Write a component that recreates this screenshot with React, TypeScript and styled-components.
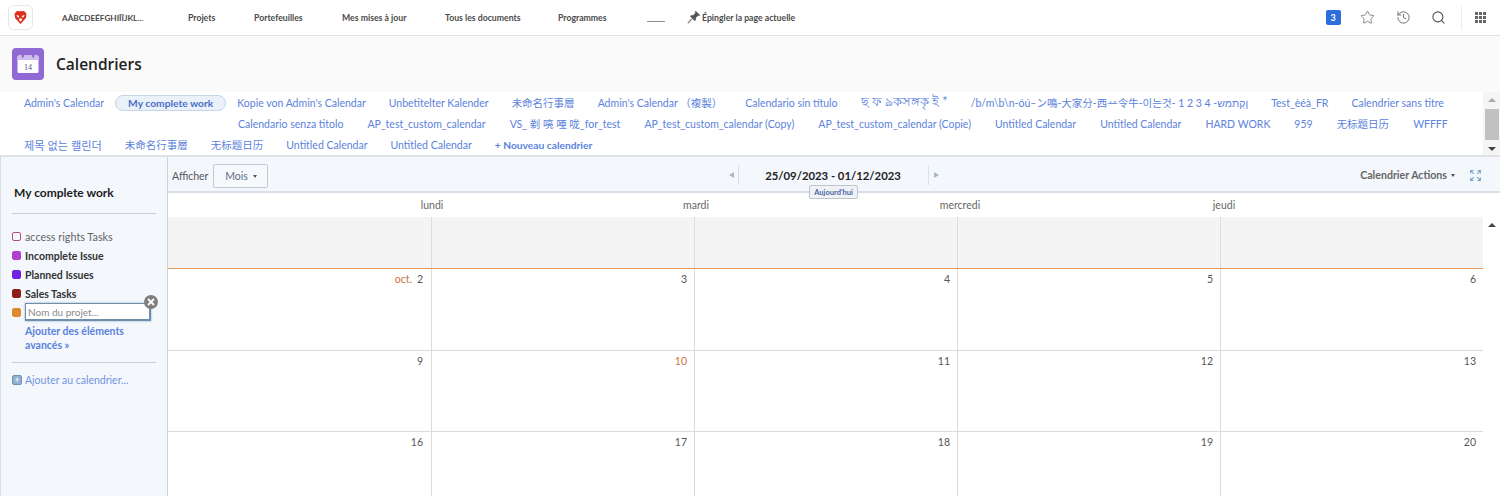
import React from 'react';
import styled, { createGlobalStyle } from 'styled-components';
import { History, Search, Star } from 'lucide-react';

const GlobalStyle = createGlobalStyle`
  html, body {
    margin: 0;
    height: 100%;
    overflow: hidden;
    background: #fff;
    font-family: Lato, "Noto Sans CJK SC", "Noto Sans CJK KR", sans-serif;
  }
`;

const Page = styled.div`
  width: 1500px;
  height: 496px;
  display: flex;
  flex-direction: column;
  overflow: hidden;
`;

/* top navigation */
const TopBar = styled.header`
  height: 35px;
  flex: none;
  display: flex;
  align-items: center;
  padding-left: 8px;
  background: #fff;
  border-bottom: 1px solid #e3e3e3;
`;

const LogoBox = styled.div`
  width: 25px;
  height: 25px;
  box-sizing: border-box;
  border: 1px solid #e8e8e8;
  border-radius: 5px;
  display: flex;
  align-items: center;
  justify-content: center;
  margin-right: 29px;
`;

const NavItem = styled.a<{ $width: number; $size?: number }>`
  width: ${(p) => p.$width}px;
  flex: none;
  font-size: ${(p) => p.$size ?? 8.7}px;
  font-weight: 700;
  color: #4b4b4b;
  white-space: nowrap;
`;

const NavDash = styled.span`
  width: 18px;
  height: 1px;
  margin: 8px 22px 0 0;
  background: #8e8e8e;
  flex: none;
`;

const PinLabel = styled.span`
  display: flex;
  align-items: center;
  gap: 1px;
  font-size: 8.7px;
  font-weight: 700;
  color: #4b4b4b;
  margin-top: -1px;
`;

const TopRight = styled.div`
  margin-left: auto;
  display: flex;
  align-items: center;
`;

const CountBadge = styled.span`
  width: 15px;
  height: 15px;
  background: #2c6fdc;
  border-radius: 2px;
  color: #fff;
  font-size: 9px;
  font-weight: 700;
  display: flex;
  align-items: center;
  justify-content: center;
  margin-right: 19px;
`;

const IconSlot = styled.span<{ $color?: string }>`
  width: 16px;
  height: 16px;
  display: flex;
  align-items: center;
  justify-content: center;
  margin-right: 19.5px;
  color: ${(p) => p.$color ?? '#666'};
`;

const AppsSlot = styled.div`
  height: 24px;
  width: 24px;
  border-left: 1px solid #ececec;
  margin-left: -5px;
  margin-right: 14px;
  display: flex;
  align-items: center;
  justify-content: flex-end;
`;

const AppsGrid = styled.div`
  display: grid;
  grid-template-columns: repeat(3, 2.6px);
  gap: 1.6px;
`;

const AppsDot = styled.i`
  width: 2.6px;
  height: 2.6px;
  background: #666;
`;

/* page title */
const TitleBar = styled.div`
  height: 56px;
  flex: none;
  display: flex;
  align-items: center;
  gap: 12px;
  padding-left: 12px;
  background: #fafafa;
`;

const Title = styled.h1`
  margin: 0;
  font-family: "Open Sans", sans-serif;
  font-size: 15.5px;
  font-weight: 600;
  color: #222;
`;

/* calendar tabs */
const TabsWrap = styled.div`
  height: 63px;
  flex: none;
  display: flex;
  background: #fff;
  border-bottom: 2px solid #dfe1e3;
`;

const TabRows = styled.div`
  flex: 1;
  min-width: 0;
`;

const TabRow = styled.div<{ $indent: number; $gap: number }>`
  height: 21px;
  display: flex;
  align-items: center;
  gap: ${(p) => p.$gap}px;
  padding-left: ${(p) => p.$indent}px;
  white-space: nowrap;
`;

const Tab = styled.a<{ $active?: boolean; $bold?: boolean; $size?: number }>`
  font-size: ${(p) => p.$size ?? (p.$bold || p.$active ? 10.25 : 10.5)}px;
  color: #5b82dc;
  font-weight: ${(p) => (p.$active || p.$bold ? 700 : 400)};
  ${(p) =>
    p.$active &&
    `
    background: #eaf1f9;
    border: 1px solid #c4d5e8;
    border-radius: 9px;
    padding: 1px 12px;
    margin: 0 -12px 0 -12px;
    color: #4a6fc8;
  `}
`;

const ScrollBar = styled.div`
  width: 17px;
  flex: none;
  display: flex;
  flex-direction: column;
  align-items: center;
  background: #f5f5f5;
  justify-content: space-between;
  padding: 6px 0 4px;
  box-sizing: border-box;
`;

const ScrollThumb = styled.div`
  width: 14px;
  height: 31px;
  background: #c1c1c1;
`;

const ArrowUp = styled.i<{ $color?: string }>`
  width: 0;
  height: 0;
  border-left: 4px solid transparent;
  border-right: 4px solid transparent;
  border-bottom: 4px solid ${(p) => p.$color ?? '#444'};
`;

const ArrowDown = styled.i`
  width: 0;
  height: 0;
  border-left: 4px solid transparent;
  border-right: 4px solid transparent;
  border-top: 4px solid #444;
`;

/* body */
const Body = styled.div`
  flex: 1;
  min-height: 0;
  display: flex;
`;

const Sidebar = styled.aside`
  width: 168px;
  flex: none;
  box-sizing: border-box;
  background: #f4f8fd;
  border-left: 1px solid #d5dde6;
  border-right: 1px solid #c9d3de;
  padding: 0 11px;
`;

const SideTitle = styled.h2`
  margin: 0;
  height: 57px;
  display: flex;
  align-items: center;
  box-sizing: border-box;
  padding: 15px 0 0 2px;
  font-size: 12px;
  font-weight: 700;
  color: #1c1c1c;
  border-bottom: 1px solid #c5cfda;
`;

const SideList = styled.div`
  padding-top: 13px;
  padding-bottom: 10px;
  border-bottom: 1px solid #c5cfda;
`;

const SideRow = styled.div`
  height: 19px;
  display: flex;
  align-items: center;
  gap: 4px;
`;

const Swatch = styled.span<{ $color: string; $hollow?: boolean }>`
  width: 9px;
  height: 9px;
  box-sizing: border-box;
  flex: none;
  border-radius: 2px;
  border: 1px solid ${(p) => p.$color};
  background: ${(p) => (p.$hollow ? 'transparent' : p.$color)};
`;

const SideLabel = styled.span<{ $bold?: boolean }>`
  font-size: ${(p) => (p.$bold ? '10.5px' : '10.8px')};
  color: ${(p) => (p.$bold ? '#333' : '#666')};
  font-weight: ${(p) => (p.$bold ? 700 : 400)};
`;

const InputRow = styled.div`
  position: relative;
  display: flex;
  align-items: center;
  gap: 4px;
`;

const NameInput = styled.div`
  width: 126px;
  height: 18px;
  box-sizing: border-box;
  background: #fff;
  border: 1px solid #6f8eac;
  border-right-width: 2px;
  border-bottom-width: 2px;
  box-shadow: 0 0 2px #88a4c0;
  font-size: 10px;
  color: #8a8a8a;
  padding: 2px 2px;
  line-height: 12px;
`;

const ClearBadge = styled.span`
  position: absolute;
  left: 132px;
  top: -8px;
  width: 14px;
  height: 14px;
  border-radius: 50%;
  background: #7f7f7f;
  display: flex;
  align-items: center;
  justify-content: center;
`;

const AdvancedLink = styled.a`
  display: block;
  margin: 4px 0 0 13px;
  font-size: 10.5px;
  line-height: 13.5px;
  font-weight: 700;
  color: #5b82dc;
`;

const AddRow = styled.div`
  display: flex;
  align-items: center;
  gap: 3px;
  margin-top: 11px;
  font-size: 10.5px;
  color: #6f93e0;
`;

const AddIcon = styled.span`
  width: 8px;
  height: 8px;
  background: #8fb0cf;
  border: 1px solid #6f93b5;
  border-radius: 2px;
  color: #fff;
  font-size: 9px;
  line-height: 8px;
  text-align: center;
`;

/* calendar */
const Main = styled.main`
  flex: 1;
  min-width: 0;
  display: flex;
  flex-direction: column;
`;

const Toolbar = styled.div`
  height: 36px;
  flex: none;
  box-sizing: border-box;
  position: relative;
  display: grid;
  grid-template-columns: 1fr auto 1fr;
  align-items: center;
  background: #f4f8fd;
  border-bottom: 2px solid #d7dfe8;
  padding: 3px 19px 0 4px;
`;

const ToolLeft = styled.div`
  display: flex;
  align-items: center;
  gap: 5px;
  font-size: 10.5px;
  color: #555;
`;

const ViewButton = styled.button`
  width: 55px;
  height: 24px;
  padding: 0;
  background: #f6f9fc;
  border: 1px solid #c3c9d0;
  border-radius: 2px;
  font: inherit;
  color: #5d6c88;
  display: flex;
  align-items: center;
  justify-content: center;
  gap: 5px;
`;

const Caret = styled.i`
  width: 0;
  height: 0;
  border-left: 2.5px solid transparent;
  border-right: 2.5px solid transparent;
  border-top: 3px solid #555;
  margin-top: 1px;
`;

const DateNav = styled.div`
  display: flex;
  align-items: center;
  margin: -1px 0 0 14px;
`;

const ArrowLeft = styled.i`
  width: 0;
  height: 0;
  border-top: 3.5px solid transparent;
  border-bottom: 3.5px solid transparent;
  border-right: 5px solid #a9b6c4;
`;

const ArrowRight = styled.i`
  width: 0;
  height: 0;
  border-top: 3.5px solid transparent;
  border-bottom: 3.5px solid transparent;
  border-left: 5px solid #a9b6c4;
`;

const DateRange = styled.div`
  width: 189px;
  height: 20px;
  margin: 0 5px 0 4px;
  border-left: 1px solid #d9e0e8;
  border-right: 1px solid #d9e0e8;
  display: flex;
  align-items: center;
  justify-content: center;
  font-size: 11.3px;
  font-weight: 700;
  color: #222;
`;

const TodayButton = styled.button`
  position: absolute;
  left: 641px;
  top: 28px;
  width: 49px;
  height: 14px;
  padding: 0;
  background: #f0f2f5;
  border: 1px solid #bfc4ca;
  border-radius: 2px;
  font-family: inherit;
  font-size: 7.5px;
  font-weight: 700;
  color: #4a65a6;
  z-index: 1;
`;

const ToolRight = styled.div`
  display: flex;
  align-items: center;
  justify-content: flex-end;
  gap: 15px;
  margin-top: -1px;
`;

const ActionsLabel = styled.span`
  display: flex;
  align-items: center;
  gap: 4px;
  font-size: 10.6px;
  font-weight: 700;
  color: #666;
`;

const GridArea = styled.div`
  flex: 1;
  min-height: 0;
  display: flex;
  overflow: hidden;
`;

const GridColumn = styled.div`
  width: 1315px;
  flex: none;
`;

const DayHeads = styled.div`
  height: 24px;
  display: grid;
  grid-template-columns: repeat(4, 264px);
  padding-left: 132px;
  align-items: center;
  font-size: 10.5px;
  color: #666;
`;

const DayHead = styled.span`
  text-align: center;
`;

const Week = styled.div<{ $height: number; $top?: boolean }>`
  height: ${(p) => p.$height}px;
  box-sizing: border-box;
  display: grid;
  grid-template-columns: repeat(5, 263px);
  ${(p) =>
    p.$top
      ? 'background: #f4f4f4; border-bottom: 1px solid #e59a5c;'
      : 'border-bottom: 1px solid #dcdcdc;'}
`;

const DayCell = styled.div`
  box-sizing: border-box;
  border-left: 1px solid #dcdcdc;
  padding: 4px 7px 0 0;
  display: flex;
  justify-content: flex-end;
  gap: 5px;
  font-size: 10.5px;
  color: #555;
  &:first-child {
    border-left: none;
    padding-right: 8px;
  }
`;

const DayMark = styled.span`
  color: #c8743a;
`;

const GridScroll = styled.div`
  flex: 1;
  display: flex;
  justify-content: center;
  padding-top: 30px;
`;

const row1: { label: string; size?: number }[] = [
  { label: "Kopie von Admin's Calendar" },
  { label: 'Unbetitelter Kalender' },
  { label: '未命名行事層' },
  { label: "Admin's Calendar （複製）" },
  { label: 'Calendario sin título' },
  { label: 'ছ ফ ঌকসঙ্গকৃ ই *', size: 12.5 },
  { label: '/b/m\\b\\n-óú–ン鳴-大家分-西䒑令牛-이는것- 1 2 3 4 -ןקְתמש' },
  { label: 'Test_èéà_FR' },
  { label: 'Calendrier sans titre' },
];

const row2 = [
  'Calendario senza titolo',
  'AP_test_custom_calendar',
  'VS_ 剃 喨 唖 咙_for_test',
  'AP_test_custom_calendar (Copy)',
  'AP_test_custom_calendar (Copie)',
  'Untitled Calendar',
  'Untitled Calendar',
  'HARD WORK',
  '959',
  '无标题日历',
  'WFFFF',
];

const row3 = ['未命名行事層', '无标题日历', 'Untitled Calendar', 'Untitled Calendar'];

const sideItems = [
  { label: 'Incomplete Issue', color: '#b23fd0' },
  { label: 'Planned Issues', color: '#6f23e0' },
  { label: 'Sales Tasks', color: '#8f1a1a' },
];

const weeks = [
  { height: 82, days: ['2', '3', '4', '5', '6'], mark: 'oct.' },
  { height: 81, days: ['9', '10', '11', '12', '13'] },
  { height: 81, days: ['16', '17', '18', '19', '20'] },
];

const BrandLogo = () => (
  <svg width="15" height="15" viewBox="0 0 16 16">
    <path d="M4.2 1 L8 1.4 L11.8 1 L14.4 4 L13.8 8.4 L8 15 L2.2 8.4 L1.6 4 Z" fill="#de2f1c" />
    <path d="M3.6 5 L6.6 6.4 L6.2 8 L4.8 7.6 Z M12.4 5 L9.4 6.4 L9.8 8 L11.2 7.6 Z" fill="#fff" />
    <path d="M6.4 9.4 L8 8.8 L9.6 9.4 L9.2 11.2 L8 12.2 L6.8 11.2 Z" fill="#fff" />
  </svg>
);

const CalendarIcon = () => (
  <svg width="32" height="32" viewBox="0 0 32 32">
    <rect width="32" height="32" rx="4" fill="#9069d4" />
    <rect x="5.5" y="7.5" width="21" height="17.5" rx="1.5" fill="#fff" />
    <path d="M5.5 12 V9 A1.5 1.5 0 0 1 7 7.5 H25 A1.5 1.5 0 0 1 26.5 9 V12 Z" fill="#cdbdea" />
    <rect x="10" y="6.5" width="1.5" height="3" fill="#7a56bf" />
    <rect x="20.5" y="6.5" width="1.5" height="3" fill="#7a56bf" />
    <text x="16" y="21.5" textAnchor="middle" fontSize="8" fontFamily="Liberation Serif, serif" fill="#5b4a86">14</text>
  </svg>
);

const PinIcon = () => (
  <svg width="14" height="14" viewBox="0 0 14 14">
    <path d="M8.6 0.8 L13.2 5.2 L12.2 6 L11.2 5.6 L8.8 8 L8.8 10.2 L7.8 11 L3 6.2 L3.9 5.2 L6.1 5.2 L8.5 2.8 L8 1.7 Z" fill="#555" />
    <path d="M5 8.8 L0.8 13.2" stroke="#777" strokeWidth="1.2" />
  </svg>
);

const ExpandIcon = () => (
  <svg width="11" height="11" viewBox="0 0 11 11" fill="none" stroke="#7fa6c9" strokeWidth="1.1">
    <path d="M0.6 3.4 V0.6 H3.4 M0.8 0.8 L3.8 3.8" />
    <path d="M7.6 0.6 H10.4 V3.4 M10.2 0.8 L7.2 3.8" />
    <path d="M0.6 7.6 V10.4 H3.4 M0.8 10.2 L3.8 7.2" />
    <path d="M7.6 10.4 H10.4 V7.6 M10.2 10.2 L7.2 7.2" />
  </svg>
);

const App: React.FC = () => (
  <Page>
    <GlobalStyle />
    <TopBar>
      <LogoBox>
        <BrandLogo />
      </LogoBox>
      <NavItem $width={126} $size={8.2}>AÀBCDEÉFGHIÎÏJKL...</NavItem>
      <NavItem $width={66}>Projets</NavItem>
      <NavItem $width={88}>Portefeuilles</NavItem>
      <NavItem $width={103}>Mes mises à jour</NavItem>
      <NavItem $width={113}>Tous les documents</NavItem>
      <NavItem $width={89}>Programmes</NavItem>
      <NavDash />
      <PinLabel>
        <PinIcon />
        Épingler la page actuelle
      </PinLabel>
      <TopRight>
        <CountBadge>3</CountBadge>
        <IconSlot $color="#777">
          <Star size={15} strokeWidth={1.4} />
        </IconSlot>
        <IconSlot>
          <History size={15} strokeWidth={1.5} />
        </IconSlot>
        <IconSlot $color="#555">
          <Search size={15} strokeWidth={1.8} />
        </IconSlot>
        <AppsSlot>
          <AppsGrid>
            {Array.from({ length: 9 }).map((_, i) => (
              <AppsDot key={i} />
            ))}
          </AppsGrid>
        </AppsSlot>
      </TopRight>
    </TopBar>

    <TitleBar>
      <CalendarIcon />
      <Title>Calendriers</Title>
    </TitleBar>

    <TabsWrap>
      <TabRows>
        <TabRow $indent={24} $gap={23}>
          <Tab>Admin's Calendar</Tab>
          <Tab $active>My complete work</Tab>
          {row1.map((t) => (
            <Tab key={t.label} $size={t.size}>
              {t.label}
            </Tab>
          ))}
        </TabRow>
        <TabRow $indent={238} $gap={24}>
          {row2.map((t, i) => (
            <Tab key={i}>{t}</Tab>
          ))}
        </TabRow>
        <TabRow $indent={24} $gap={23}>
          <Tab $size={11.2}>제목 없는 캘린더</Tab>
          {row3.map((t, i) => (
            <Tab key={i}>{t}</Tab>
          ))}
          <Tab $bold>+ Nouveau calendrier</Tab>
        </TabRow>
      </TabRows>
      <ScrollBar>
        <ArrowUp $color="#aaa" />
        <ScrollThumb />
        <ArrowDown />
      </ScrollBar>
    </TabsWrap>

    <Body>
      <Sidebar>
        <SideTitle>My complete work</SideTitle>
        <SideList>
          <SideRow>
            <Swatch $color="#b0507f" $hollow />
            <SideLabel>access rights Tasks</SideLabel>
          </SideRow>
          {sideItems.map((s) => (
            <SideRow key={s.label}>
              <Swatch $color={s.color} />
              <SideLabel $bold>{s.label}</SideLabel>
            </SideRow>
          ))}
          <InputRow>
            <Swatch $color="#dd8a2e" />
            <NameInput>Nom du projet...</NameInput>
            <ClearBadge>
              <svg width="8" height="8" viewBox="0 0 8 8" stroke="#fff" strokeWidth="1.8">
                <path d="M1 1 L7 7 M7 1 L1 7" />
              </svg>
            </ClearBadge>
          </InputRow>
          <AdvancedLink>
            Ajouter des éléments
            <br />
            avancés »
          </AdvancedLink>
        </SideList>
        <AddRow>
          <AddIcon>+</AddIcon>
          Ajouter au calendrier...
        </AddRow>
      </Sidebar>

      <Main>
        <Toolbar>
          <ToolLeft>
            Afficher
            <ViewButton>
              Mois
              <Caret />
            </ViewButton>
          </ToolLeft>
          <DateNav>
            <ArrowLeft />
            <DateRange>25/09/2023 - 01/12/2023</DateRange>
            <ArrowRight />
          </DateNav>
          <TodayButton>Aujourd'hui</TodayButton>
          <ToolRight>
            <ActionsLabel>
              Calendrier Actions
              <Caret />
            </ActionsLabel>
            <ExpandIcon />
          </ToolRight>
        </Toolbar>

        <GridArea>
          <GridColumn>
            <DayHeads>
              {['lundi', 'mardi', 'mercredi', 'jeudi'].map((d) => (
                <DayHead key={d}>{d}</DayHead>
              ))}
            </DayHeads>
            <Week $height={52} $top>
              {[0, 1, 2, 3, 4].map((i) => (
                <DayCell key={i} />
              ))}
            </Week>
            {weeks.map((w) => (
              <Week key={w.days[0]} $height={w.height}>
                {w.days.map((d, i) => (
                  <DayCell key={d}>
                    {i === 0 && w.mark && <DayMark>{w.mark}</DayMark>}
                    {d === '10' ? <DayMark>{d}</DayMark> : d}
                  </DayCell>
                ))}
              </Week>
            ))}
          </GridColumn>
          <GridScroll>
            <ArrowUp />
          </GridScroll>
        </GridArea>
      </Main>
    </Body>
  </Page>
);

export default App;
